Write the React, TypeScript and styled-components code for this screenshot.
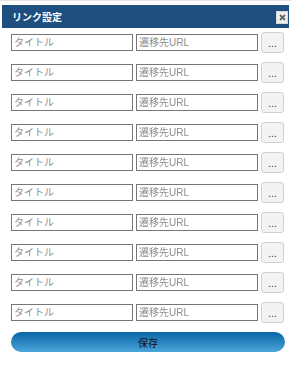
import React from "react";
import styled, { createGlobalStyle } from "styled-components";

const Global = createGlobalStyle`
  html, body { margin: 0; padding: 0; background: #fff; }
  body { font-family: "Liberation Sans", Arial, "Noto Sans CJK JP", sans-serif; }
`;

const Dialog = styled.div`
  width: 291px;
  height: 367px;
  box-sizing: border-box;
  padding: 4px 2px 0 2px;
  border-top: 1px solid #e4e4e4;
  background: #fff;
`;

const TitleBar = styled.div`
  height: 23px;
  background: #1e4f7e;
  display: flex;
  align-items: center;
  justify-content: space-between;
  padding: 0 1px 0 10px;
`;

const Title = styled.span`
  color: #fff;
  font-weight: bold;
  font-size: 10px;
  margin-top: -1px;
  font-family: "Liberation Sans", Arial, "Noto Sans CJK JP", sans-serif;
`;

const CloseBtn = styled.button`
  width: 12px;
  height: 13px;
  margin-top: 2px;
  padding: 0;
  border: 1px solid #d6d6d6;
  background: #efefef;
  display: flex;
  align-items: center;
  justify-content: center;
`;

const Body = styled.div`
  padding: 4px 4px 0 9px;
  display: flex;
  flex-direction: column;
  gap: 9px;
`;

const Row = styled.div`
  display: flex;
  align-items: center;
  height: 21px;
  gap: 3px;
`;

const Field = styled.input`
  flex: none;
  width: 122px;
  height: 17px;
  box-sizing: border-box;
  border: 1px solid #767676;
  padding: 0 2px;
  font-size: 10px;
  font-family: "Liberation Sans", Arial, "Noto Sans CJK JP", sans-serif;
  color: #000;
  outline: none;
  &::placeholder { color: #8e8e8e; }
`;

const PickBtn = styled.button`
  flex: none;
  width: 23px;
  height: 21px;
  box-sizing: border-box;
  border: 1px solid #d0d0d0;
  border-radius: 3px;
  background: #f3f3f3;
  font-size: 11px;
  color: #444;
  padding: 0;
  font-family: "Liberation Sans", Arial, sans-serif;
`;

const SaveBtn = styled.button`
  width: 274px;
  height: 20px;
  border: none;
  border-radius: 10px;
  background: linear-gradient(to bottom, #0865a6, #4ba5d8);
  color: #111;
  font-size: 10px;
  font-family: "Liberation Sans", Arial, "Noto Sans CJK JP", sans-serif;
  padding: 0;
`;

export default function App() {
  const rows = Array.from({ length: 10 }, (_, i) => i);
  return (
    <>
      <Global />
      <Dialog>
        <TitleBar>
          <Title>リンク設定</Title>
          <CloseBtn aria-label="close">
            <svg width="7" height="7" viewBox="0 0 7 7">
              <path d="M1 1L6 6M6 1L1 6" stroke="#666" strokeWidth="1.8" />
            </svg>
          </CloseBtn>
        </TitleBar>
        <Body>
          {rows.map((i) => (
            <Row key={i}>
              <Field placeholder="タイトル" autoFocus={i === 0} />
              <Field placeholder="遷移先URL" />
              <PickBtn>...</PickBtn>
            </Row>
          ))}
          <SaveBtn>保存</SaveBtn>
        </Body>
      </Dialog>
    </>
  );
}
